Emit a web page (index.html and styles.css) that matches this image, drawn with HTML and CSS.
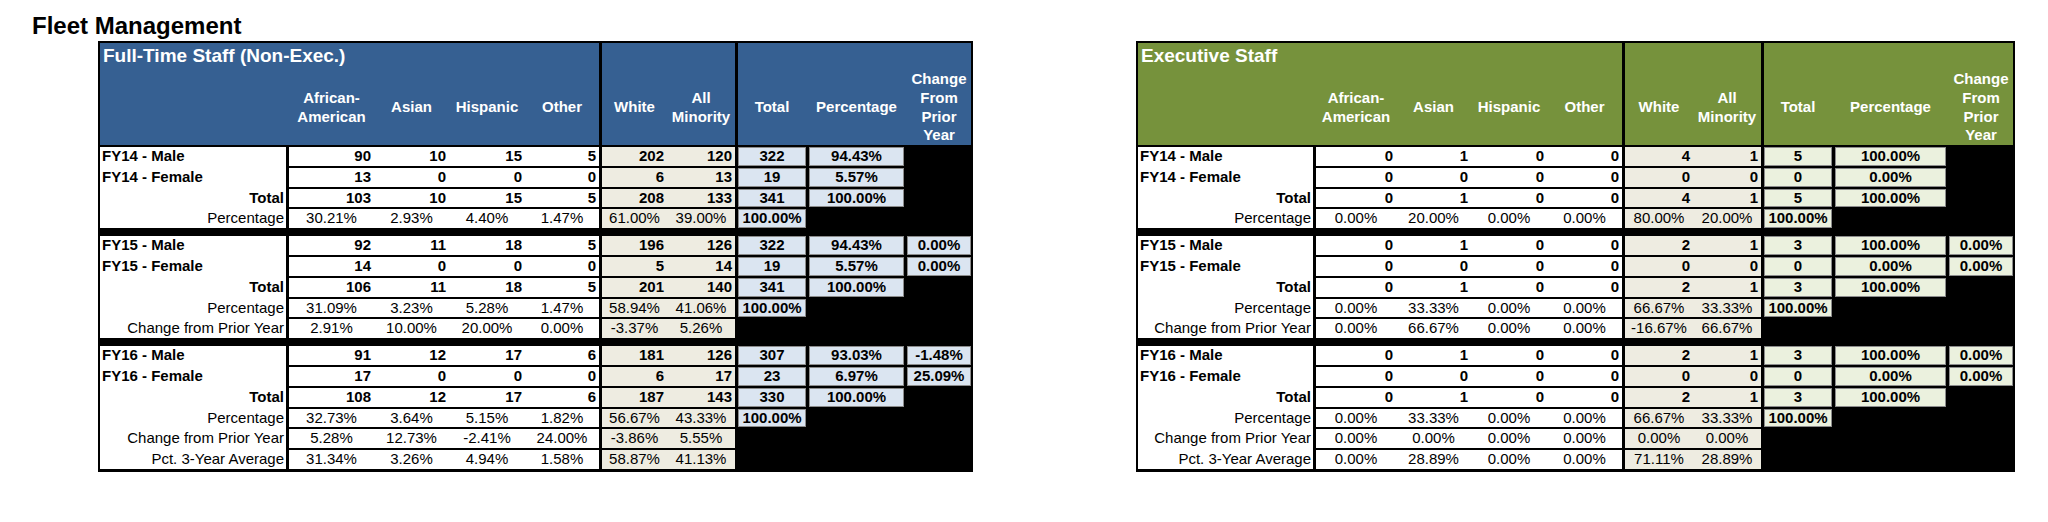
FILE: index.html
```html
<!DOCTYPE html>
<html lang="en">
<head>
<meta charset="utf-8">
<title>Fleet Management</title>
<link rel="stylesheet" href="styles.css">
</head>
<body>
<div class="page">
  <h1 class="title">Fleet Management</h1>
  <div class="sheets">

    <div class="sheet fte">
      <div class="hd hd-main">
        <div class="hd-title">Full-Time Staff (Non-Exec.)</div>
        <div class="heads race-h"><span>African-<br>American</span><span>Asian</span><span>Hispanic</span><span>Other</span></div>
      </div>
      <div class="hd hd-white"><div class="heads white-h"><span>White</span><span>All<br>Minority</span></div></div>
      <div class="hd hd-tot"><div class="heads tot-h"><span>Total</span><span>Percentage</span><span>Change<br>From<br>Prior<br>Year</span></div></div>

      <div class="lbl s4"><div class="fy">FY14 - Male</div><div class="fy">FY14 - Female</div><div class="tl">Total</div><div class="sl">Percentage</div></div>
      <div class="race n"><span>90</span><span>10</span><span>15</span><span>5</span></div>
      <div class="wht n"><span>202</span><span>120</span></div>
      <div class="box">322</div><div class="box">94.43%</div><i></i>
      <div class="race n"><span>13</span><span>0</span><span>0</span><span>0</span></div>
      <div class="wht n"><span>6</span><span>13</span></div>
      <div class="box">19</div><div class="box">5.57%</div><i></i>
      <div class="race n"><span>103</span><span>10</span><span>15</span><span>5</span></div>
      <div class="wht n"><span>208</span><span>133</span></div>
      <div class="box">341</div><div class="box">100.00%</div><i></i>
      <div class="race p"><span>30.21%</span><span>2.93%</span><span>4.40%</span><span>1.47%</span></div>
      <div class="wht p"><span>61.00%</span><span>39.00%</span></div>
      <div class="box">100.00%</div><i></i><i></i>
      <div class="band"></div>

      <div class="lbl s5"><div class="fy">FY15 - Male</div><div class="fy">FY15 - Female</div><div class="tl">Total</div><div class="sl">Percentage</div><div class="sl">Change from Prior Year</div></div>
      <div class="race n"><span>92</span><span>11</span><span>18</span><span>5</span></div>
      <div class="wht n"><span>196</span><span>126</span></div>
      <div class="box">322</div><div class="box">94.43%</div><div class="box">0.00%</div>
      <div class="race n"><span>14</span><span>0</span><span>0</span><span>0</span></div>
      <div class="wht n"><span>5</span><span>14</span></div>
      <div class="box">19</div><div class="box">5.57%</div><div class="box">0.00%</div>
      <div class="race n"><span>106</span><span>11</span><span>18</span><span>5</span></div>
      <div class="wht n"><span>201</span><span>140</span></div>
      <div class="box">341</div><div class="box">100.00%</div><i></i>
      <div class="race p"><span>31.09%</span><span>3.23%</span><span>5.28%</span><span>1.47%</span></div>
      <div class="wht p"><span>58.94%</span><span>41.06%</span></div>
      <div class="box">100.00%</div><i></i><i></i>
      <div class="race p"><span>2.91%</span><span>10.00%</span><span>20.00%</span><span>0.00%</span></div>
      <div class="wht p"><span>-3.37%</span><span>5.26%</span></div>
      <i></i><i></i><i></i>
      <div class="band"></div>

      <div class="lbl s6"><div class="fy">FY16 - Male</div><div class="fy">FY16 - Female</div><div class="tl">Total</div><div class="sl">Percentage</div><div class="sl">Change from Prior Year</div><div class="sl">Pct. 3-Year Average</div></div>
      <div class="race n"><span>91</span><span>12</span><span>17</span><span>6</span></div>
      <div class="wht n"><span>181</span><span>126</span></div>
      <div class="box">307</div><div class="box">93.03%</div><div class="box">-1.48%</div>
      <div class="race n"><span>17</span><span>0</span><span>0</span><span>0</span></div>
      <div class="wht n"><span>6</span><span>17</span></div>
      <div class="box">23</div><div class="box">6.97%</div><div class="box">25.09%</div>
      <div class="race n"><span>108</span><span>12</span><span>17</span><span>6</span></div>
      <div class="wht n"><span>187</span><span>143</span></div>
      <div class="box">330</div><div class="box">100.00%</div><i></i>
      <div class="race p"><span>32.73%</span><span>3.64%</span><span>5.15%</span><span>1.82%</span></div>
      <div class="wht p"><span>56.67%</span><span>43.33%</span></div>
      <div class="box">100.00%</div><i></i><i></i>
      <div class="race p"><span>5.28%</span><span>12.73%</span><span>-2.41%</span><span>24.00%</span></div>
      <div class="wht p"><span>-3.86%</span><span>5.55%</span></div>
      <i></i><i></i><i></i>
      <div class="race p"><span>31.34%</span><span>3.26%</span><span>4.94%</span><span>1.58%</span></div>
      <div class="wht p"><span>58.87%</span><span>41.13%</span></div>
      <i></i><i></i><i></i>
    </div>

    <div class="sheet exec">
      <div class="hd hd-main">
        <div class="hd-title">Executive Staff</div>
        <div class="heads race-h"><span>African-<br>American</span><span>Asian</span><span>Hispanic</span><span>Other</span></div>
      </div>
      <div class="hd hd-white"><div class="heads white-h"><span>White</span><span>All<br>Minority</span></div></div>
      <div class="hd hd-tot"><div class="heads tot-h"><span>Total</span><span>Percentage</span><span>Change<br>From<br>Prior<br>Year</span></div></div>

      <div class="lbl s4"><div class="fy">FY14 - Male</div><div class="fy">FY14 - Female</div><div class="tl">Total</div><div class="sl">Percentage</div></div>
      <div class="race n"><span>0</span><span>1</span><span>0</span><span>0</span></div>
      <div class="wht n"><span>4</span><span>1</span></div>
      <div class="box">5</div><div class="box">100.00%</div><i></i>
      <div class="race n"><span>0</span><span>0</span><span>0</span><span>0</span></div>
      <div class="wht n"><span>0</span><span>0</span></div>
      <div class="box">0</div><div class="box">0.00%</div><i></i>
      <div class="race n"><span>0</span><span>1</span><span>0</span><span>0</span></div>
      <div class="wht n"><span>4</span><span>1</span></div>
      <div class="box">5</div><div class="box">100.00%</div><i></i>
      <div class="race p"><span>0.00%</span><span>20.00%</span><span>0.00%</span><span>0.00%</span></div>
      <div class="wht p"><span>80.00%</span><span>20.00%</span></div>
      <div class="box">100.00%</div><i></i><i></i>
      <div class="band"></div>

      <div class="lbl s5"><div class="fy">FY15 - Male</div><div class="fy">FY15 - Female</div><div class="tl">Total</div><div class="sl">Percentage</div><div class="sl">Change from Prior Year</div></div>
      <div class="race n"><span>0</span><span>1</span><span>0</span><span>0</span></div>
      <div class="wht n"><span>2</span><span>1</span></div>
      <div class="box">3</div><div class="box">100.00%</div><div class="box">0.00%</div>
      <div class="race n"><span>0</span><span>0</span><span>0</span><span>0</span></div>
      <div class="wht n"><span>0</span><span>0</span></div>
      <div class="box">0</div><div class="box">0.00%</div><div class="box">0.00%</div>
      <div class="race n"><span>0</span><span>1</span><span>0</span><span>0</span></div>
      <div class="wht n"><span>2</span><span>1</span></div>
      <div class="box">3</div><div class="box">100.00%</div><i></i>
      <div class="race p"><span>0.00%</span><span>33.33%</span><span>0.00%</span><span>0.00%</span></div>
      <div class="wht p"><span>66.67%</span><span>33.33%</span></div>
      <div class="box">100.00%</div><i></i><i></i>
      <div class="race p"><span>0.00%</span><span>66.67%</span><span>0.00%</span><span>0.00%</span></div>
      <div class="wht p"><span>-16.67%</span><span>66.67%</span></div>
      <i></i><i></i><i></i>
      <div class="band"></div>

      <div class="lbl s6"><div class="fy">FY16 - Male</div><div class="fy">FY16 - Female</div><div class="tl">Total</div><div class="sl">Percentage</div><div class="sl">Change from Prior Year</div><div class="sl">Pct. 3-Year Average</div></div>
      <div class="race n"><span>0</span><span>1</span><span>0</span><span>0</span></div>
      <div class="wht n"><span>2</span><span>1</span></div>
      <div class="box">3</div><div class="box">100.00%</div><div class="box">0.00%</div>
      <div class="race n"><span>0</span><span>0</span><span>0</span><span>0</span></div>
      <div class="wht n"><span>0</span><span>0</span></div>
      <div class="box">0</div><div class="box">0.00%</div><div class="box">0.00%</div>
      <div class="race n"><span>0</span><span>1</span><span>0</span><span>0</span></div>
      <div class="wht n"><span>2</span><span>1</span></div>
      <div class="box">3</div><div class="box">100.00%</div><i></i>
      <div class="race p"><span>0.00%</span><span>33.33%</span><span>0.00%</span><span>0.00%</span></div>
      <div class="wht p"><span>66.67%</span><span>33.33%</span></div>
      <div class="box">100.00%</div><i></i><i></i>
      <div class="race p"><span>0.00%</span><span>0.00%</span><span>0.00%</span><span>0.00%</span></div>
      <div class="wht p"><span>0.00%</span><span>0.00%</span></div>
      <i></i><i></i><i></i>
      <div class="race p"><span>0.00%</span><span>28.89%</span><span>0.00%</span><span>0.00%</span></div>
      <div class="wht p"><span>71.11%</span><span>28.89%</span></div>
      <i></i><i></i><i></i>
    </div>

  </div>
</div>
</body>
</html>
```

FILE: styles.css
```css
* { box-sizing: border-box; }

body {
  margin: 0;
  background: #fff;
  color: #000;
  font-family: "Liberation Sans", Arial, Helvetica, sans-serif;
}

.page { padding-top: 12px; }

.title {
  margin: 0;
  padding-left: 32px;
  font-size: 24px;
  line-height: 28px;
  font-weight: bold;
}

.sheets {
  display: flex;
  align-items: flex-start;
  gap: 163px;
  padding-left: 98px;
  margin-top: 1px;
}

.sheet {
  display: grid;
  grid-template-columns: var(--lw) var(--rw) var(--ww) var(--tw) var(--pw) var(--cw);
  column-gap: 3px;
  row-gap: 2px;
  background: #000;
  padding: 2px 2px 3px;
  font-size: 15px;
}

.fte {
  --lw: 186px;
  --r1: 85px; --r2: 75px; --r3: 76px; --r4: 74px; --rw: 310px;
  --w1: 65px; --w2: 68px; --ww: 133px;
  --tw: 68px; --pw: 95px; --cw: 64px;
  --head: #366092;
  --light: #dbe5f1;
}

.exec {
  --lw: 175px;
  --r1: 80px; --r2: 75px; --r3: 76px; --r4: 75px; --rw: 306px;
  --w1: 68px; --w2: 68px; --ww: 136px;
  --tw: 68px; --pw: 111px; --cw: 64px;
  --head: #76923c;
  --light: #ebf1de;
}

/* header */
.hd {
  background: var(--head);
  color: #fff;
  font-weight: bold;
  height: 102px;
  display: flex;
  flex-direction: column;
}
.hd-main { grid-column: 1 / 3; }
.hd-tot { grid-column: 4 / 7; }
.hd-white, .hd-tot { padding-top: 27px; }

.hd-title {
  font-size: 19px;
  line-height: 22px;
  height: 27px;
  padding: 2px 0 0 3px;
  white-space: nowrap;
}

.heads {
  flex: 1;
  display: grid;
  align-items: center;
  text-align: center;
  line-height: 18.7px;
}
.race-h {
  margin-left: calc(var(--lw) + 3px);
  grid-template-columns: var(--r1) var(--r2) var(--r3) var(--r4);
}
.white-h { grid-template-columns: var(--w1) var(--w2); }
.tot-h {
  grid-template-columns: var(--tw) var(--pw) var(--cw);
  column-gap: 3px;
}

/* row labels */
.lbl {
  background: #fff;
  display: grid;
  grid-auto-rows: 18.8px;
  row-gap: 2px;
  line-height: 18.8px;
  white-space: nowrap;
}
.s4 { grid-row: span 4; }
.s5 { grid-row: span 5; }
.s6 { grid-row: span 6; }

.fy { font-weight: bold; padding-left: 2px; }
.tl { font-weight: bold; text-align: right; padding-right: 2px; }
.sl { text-align: right; padding-right: 2px; }

/* data cells */
.race, .wht {
  display: grid;
  height: 18.8px;
  line-height: 18.8px;
  white-space: nowrap;
}
.race {
  background: #fff;
  grid-template-columns: var(--r1) var(--r2) var(--r3) var(--r4);
}
.wht {
  background: #eeece1;
  grid-template-columns: var(--w1) var(--w2);
}
.n { font-weight: bold; text-align: right; }
.n span { padding-right: 3px; }
.p { text-align: center; }

.box {
  background: var(--light);
  border: 1px solid #8c8c8c;
  height: 18.8px;
  line-height: 16.8px;
  text-align: center;
  font-weight: bold;
  white-space: nowrap;
}

.band {
  grid-column: 1 / -1;
  height: 4px;
}
```
